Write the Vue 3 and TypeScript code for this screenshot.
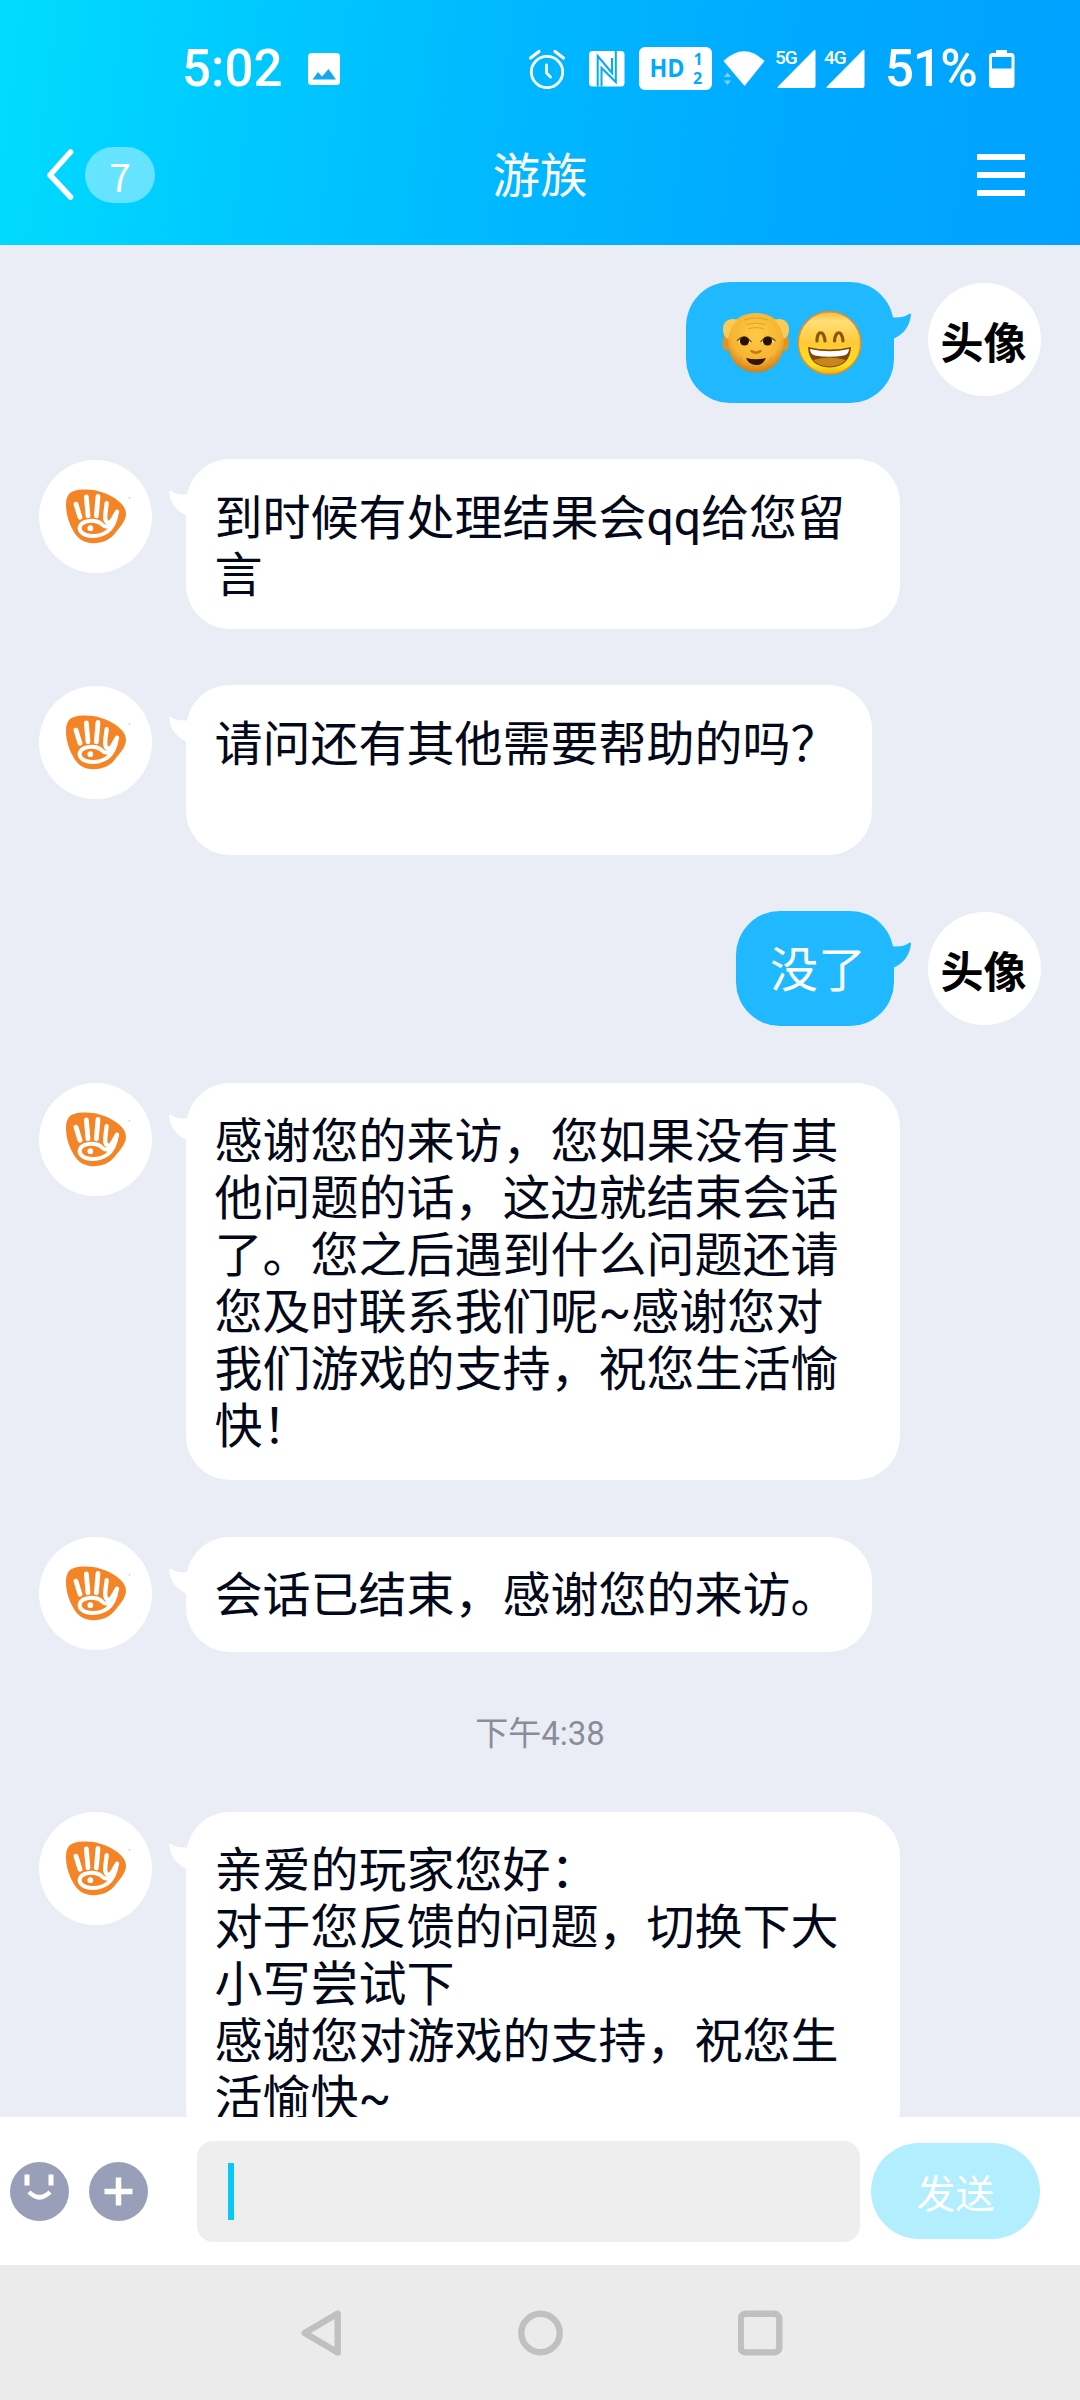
<script setup lang="ts">
interface Message {
  id: number
  side: 'left' | 'right'
  lines?: string[]
  emoji?: boolean
  wide?: boolean
  time?: string
}

const messages: Message[] = [
  { id: 1, side: 'right', emoji: true },
  { id: 2, side: 'left', wide: true, lines: ['到时候有处理结果会qq给您留', '言'] },
  { id: 3, side: 'left', lines: ['请问还有其他需要帮助的吗？', ''] },
  { id: 4, side: 'right', lines: ['没了'] },
  {
    id: 5,
    side: 'left',
    wide: true,
    lines: [
      '感谢您的来访，您如果没有其',
      '他问题的话，这边就结束会话',
      '了。您之后遇到什么问题还请',
      '您及时联系我们呢~感谢您对',
      '我们游戏的支持，祝您生活愉',
      '快！',
    ],
  },
  { id: 6, side: 'left', lines: ['会话已结束，感谢您的来访。'] },
  {
    id: 7,
    side: 'left',
    wide: true,
    time: '下午4:38',
    lines: [
      '亲爱的玩家您好：',
      '对于您反馈的问题，切换下大',
      '小写尝试下',
      '感谢您对游戏的支持，祝您生',
      '活愉快~',
    ],
  },
]
</script>

<template>
  <div class="screen">
    <header class="header">
      <div class="status">
        <span class="clock">5:02</span>
        <svg class="s-image" width="32" height="32" viewBox="0 0 32 32">
          <rect width="32" height="32" rx="3.5" fill="#fff" />
          <path d="M4.5 26.5 10 19l4 4.500L20.500 16l7.500 10.500z" fill="#14a9ee" />
        </svg>
        <div class="status-right">
          <svg class="s-alarm" width="38" height="40" viewBox="0 0 38 40" fill="none" stroke="#fff" stroke-linecap="round">
            <circle cx="19" cy="23" r="15.700" stroke-width="2.800" />
            <path d="M2.500 9 11 2.500M27 2.500 35.500 9" stroke-width="3.200" />
            <path d="M18.500 16v8l4 4" stroke-width="2.800" stroke-linejoin="round" />
          </svg>
          <svg class="s-nfc" width="36" height="36" viewBox="0 0 36 36">
            <rect width="35.500" height="35.500" rx="3.500" fill="#fff" />
            <path d="M8.700 35.500V5L23 22V7" fill="none" stroke="#00abff" stroke-width="2" />
            <path d="M12.500 35.500V17L26.800 31V0" fill="none" stroke="#00abff" stroke-width="2" />
          </svg>
          <svg class="s-hd" width="73" height="43" viewBox="0 0 73 43">
            <rect width="73" height="43" rx="6" fill="#fff" />
            <text x="10.500" y="30" font-size="24.500" textLength="35" lengthAdjust="spacingAndGlyphs">HD</text>
            <text x="54.500" y="18" font-size="16">1</text>
            <text x="54" y="37" font-size="16">2</text>
          </svg>
          <svg class="s-wifi" width="42" height="36" viewBox="0 0 42 36">
            <path d="M.500 10Q21-9.500 41.500 10L21.500 35z" fill="#fff" />
            <path d="M1 26 4.500 21.500 8 26zM1 29.500h7L4.500 34z" fill="#7fd2ff" />
          </svg>
          <div class="sig">
            <span>5G</span>
            <svg width="41" height="40" viewBox="0 0 41 40">
              <path d="M3 37.500 38.500 1.500Q40.500 0 40.500 2V37Q40.500 39 38.500 39H4Q1.500 39 3 37.500z" fill="#fff" />
            </svg>
          </div>
          <div class="sig second">
            <span>4G</span>
            <svg width="41" height="40" viewBox="0 0 41 40">
              <path d="M3 37.500 38.500 1.500Q40.500 0 40.500 2V37Q40.500 39 38.500 39H4Q1.500 39 3 37.500z" fill="#fff" />
            </svg>
          </div>
          <span class="percent">51%</span>
          <svg class="s-bat" width="26" height="38" viewBox="0 0 26 38">
            <path d="M7 0h11v3h4q3.500 0 3.500 3.500v28q0 3.500-3.500 3.500H3.500Q0 38 0 34.500v-28Q0 3 3.500 3H7zM3 7v11.500h19.500V7z" fill="#fff" fill-rule="evenodd" />
          </svg>
        </div>
      </div>
      <div class="titlebar">
        <div class="back">
          <svg width="28" height="52" viewBox="0 0 28 52" fill="none" stroke="#fff" stroke-width="5.600" stroke-linecap="round" stroke-linejoin="round">
            <path d="M24.500 3 4 26 24.500 48" />
          </svg>
          <span class="badge">7</span>
        </div>
        <h1>游族</h1>
        <div class="menu"><i></i><i></i><i></i></div>
      </div>
    </header>

    <main class="chat">
      <template v-for="m in messages" :key="m.id">
        <div v-if="m.time" class="time">{{ m.time }}</div>
        <div class="row" :class="m.side">
          <div class="avatar">
            <svg v-if="m.side === 'left'" width="113" height="113" viewBox="27 28.5 339 339">
              <path
                d="M108 162C108 128 126 118 158 117C192 115 220 124 244 137C272 153 288 170 288 190C288 212 268 232 254 250C240 268 218 278 190 278C162 278 142 266 128 238C115 213 108 190 108 162Z"
                fill="#f58426"
              />
              <g fill="none" stroke="#fff" stroke-linecap="round" stroke-linejoin="round">
                <path d="M138 161 150 200M169 139l5 57M204 138l-5 58" stroke-width="14.500" />
                <path d="M230 158C228 178 224 196 226 206C229 220 240 220 247 208C255 195 257 190 261 184" stroke-width="13" />
                <path d="M261 184C257 212 248 232 232 243C208 261 170 260 154 245C144 234 150 220 163 215C182 207 207 211 216 222C225 232 238 230 246 216" stroke-width="12" />
              </g>
              <circle cx="181" cy="233" r="8.500" fill="#fff" />
              <circle cx="298" cy="142" r="2" fill="#9aa79a" />
            </svg>
            <span v-else>头像</span>
          </div>
          <div class="bubble" :class="{ wide: m.wide, emojis: m.emoji }">
            <svg class="tail" width="22" height="27" viewBox="0 0 22 27">
              <path d="M0 2Q0-.500 2 1Q9 6 22 4V26H18Q2 19 0 2z" />
            </svg>
            <template v-if="m.emoji">
              <svg width="68" height="62" viewBox="0 0 68 62">
                <defs>
                  <radialGradient id="oldSkin" cx=".5" cy=".35" r=".65">
                    <stop offset="0" stop-color="#ffca45" />
                    <stop offset=".7" stop-color="#f6b432" />
                    <stop offset="1" stop-color="#cf7d16" />
                  </radialGradient>
                </defs>
                <ellipse cx="4.500" cy="31" rx="4" ry="8" fill="#dd9426" />
                <ellipse cx="63" cy="31" rx="4" ry="8" fill="#dd9426" />
                <path d="M34 1C52 1 62 12 62 30C62 48 50 60.500 34 60.500C18 60.500 6 48 6 30C6 12 16 1 34 1Z" fill="url(#oldSkin)" />
                <path d="M16 8C8 5 1 9 1 17C1 23 3 25 6 27C8 22 8 15 16 8ZM52 8C60 5 67 9 67 17C67 23 65 25 62 27C60 22 60 15 52 8Z" fill="#fbc956" />
                <path d="M22 8Q34 4 46 8M24 12.500Q34 9.500 44 12.500M26 16.500Q34 14.500 42 16.500" fill="none" stroke="#dfa033" stroke-width="1" />
                <path d="M15 29Q21.500 21 29.500 30Q22 35 15 29ZM38.500 30Q46 21 53.500 29Q46 35 38.500 30Z" fill="#f6dfae" />
                <path d="M15 29Q21.500 21 29.500 30M38.500 30Q46 21 53.500 29" fill="none" stroke="#8a5512" stroke-width="1.300" />
                <circle cx="22.500" cy="29" r="4.600" fill="#281303" />
                <circle cx="45.500" cy="29" r="4.600" fill="#281303" />
                <path d="M29.500 39Q34 42.500 38.500 39" fill="none" stroke="#ca7814" stroke-width="2.500" stroke-linecap="round" />
                <path d="M20 45Q18 48 20 51M48 45Q50 48 48 51" fill="none" stroke="#e29b28" stroke-width="1.200" />
                <path d="M24 46Q34 48.500 44 46Q41 53 34 53Q27 53 24 46Z" fill="#35130a" />
              </svg>
              <svg width="65" height="66" viewBox="0 0 65 66">
                <defs>
                  <linearGradient id="smile" x1="0" y1="0" x2="0" y2="1">
                    <stop offset="0" stop-color="#f9b83d" />
                    <stop offset=".15" stop-color="#ffdf78" />
                    <stop offset=".5" stop-color="#ffc936" />
                    <stop offset=".85" stop-color="#ffe11d" />
                    <stop offset="1" stop-color="#eeb018" />
                  </linearGradient>
                </defs>
                <circle cx="32.500" cy="33" r="31.300" fill="url(#smile)" stroke="#e0902a" stroke-width="1.500" />
                <path d="M20 31C20 20 27 20 28 31M37.500 31C38.500 20 45 20 46 31" fill="none" stroke="#85570f" stroke-width="3.200" stroke-linecap="round" />
                <path d="M11 37Q32.500 42 54 37Q53 57 32.500 57.500Q12 57 11 37Z" fill="#80460d" />
                <path d="M16 50Q32.500 45 49 50Q43 56.500 32.500 56.500Q22 56.500 16 50Z" fill="#c88519" />
                <path d="M13 39Q32.500 43.500 52 39Q52 44 47 45.500Q32.500 48 18 45.500Q13 44 13 39Z" fill="#fff" />
              </svg>
            </template>
            <template v-else>
              <div v-for="(line, i) in m.lines" :key="i" class="line">{{ line }}</div>
            </template>
          </div>
        </div>
      </template>
    </main>

    <footer class="composer">
      <svg width="59" height="59" viewBox="0 0 59 59">
        <circle cx="29.500" cy="29.500" r="29.500" fill="#9a9fb9" />
        <path d="M14.500 12.500h5v11h-5zM38.500 12.500h5v11h-5z" fill="#fff" />
        <path d="M19 30Q29.500 40.500 40 30" fill="none" stroke="#fff" stroke-width="4.500" />
      </svg>
      <svg class="plus" width="59" height="59" viewBox="0 0 59 59">
        <circle cx="29.500" cy="29.500" r="29.500" fill="#9a9fb9" />
        <path d="M29.500 15.500v28M15.500 29.500h28" stroke="#fff" stroke-width="5.500" />
      </svg>
      <div class="input"><i class="caret"></i></div>
      <button class="send">发送</button>
    </footer>

    <nav class="navbar">
      <svg width="45" height="52" viewBox="0 0 45 52"><path d="M39.700 6.500V45.500L6.700 26z" /></svg>
      <svg width="45" height="52" viewBox="0 0 45 52"><circle cx="22.500" cy="26" r="19.200" /></svg>
      <svg width="45" height="52" viewBox="0 0 45 52"><rect x="2.700" y="6.800" width="38.600" height="38.600" rx="5" /></svg>
    </nav>
  </div>
</template>

<style>
body {
  margin: 0;
}
</style>

<style scoped>
.screen {
  width: 1080px;
  height: 2400px;
  display: flex;
  flex-direction: column;
  overflow: hidden;
  background: #eaedf5;
  font-family: Roboto, 'Noto Sans CJK SC', sans-serif;
}
.header {
  height: 245px;
  flex: none;
  color: #fff;
  background: linear-gradient(97deg, #00dcff 0%, #00c5ff 28%, #00b5ff 52%, #00a8ff 75%, #00a2ff 100%);
}
.status {
  height: 137px;
  display: flex;
  align-items: center;
  padding-left: 182px;
  box-sizing: border-box;
}
.clock,
.percent {
  font-size: 51px;
  font-weight: 500;
  line-height: 60px;
}
.clock {
  width: 126px;
}
.status-right {
  display: flex;
  align-items: center;
  margin-left: 188px;
}
.s-nfc {
  margin-left: 23px;
}
.s-hd {
  margin-left: 14px;
  fill: #00abff;
  font-family: 'Open Sans', sans-serif;
  font-weight: 700;
}
.s-wifi {
  margin-left: 11px;
}
.sig {
  position: relative;
  margin-left: 10px;
  height: 40px;
}
.sig.second {
  margin-left: 8px;
}
.sig svg {
  display: block;
}
.sig span {
  position: absolute;
  left: 0;
  top: -3px;
  font-size: 19px;
  line-height: 24px;
  font-weight: 500;
  letter-spacing: -1px;
}
.percent {
  margin-left: 20px;
  width: 104px;
  letter-spacing: -1.3px;
}
.titlebar {
  height: 75px;
  display: grid;
  grid-template-columns: 1fr auto 1fr;
  align-items: center;
  padding: 0 55px 0 46px;
}
.back {
  display: flex;
  align-items: center;
}
.badge {
  width: 70px;
  height: 56px;
  margin-left: 11px;
  border-radius: 28px;
  background: rgba(255, 255, 255, 0.4);
  font: 400 39px/56px 'Noto Sans CJK SC', sans-serif;
  text-align: center;
}
h1 {
  margin: 4px 0 0 9px;
  font-size: 47.5px;
  font-weight: 400;
  line-height: 60px;
}
.menu {
  justify-self: end;
  width: 48px;
  display: flex;
  flex-direction: column;
  gap: 12px;
}
.menu i {
  height: 6px;
  background: #fff;
}
.chat {
  height: 1872px;
  flex: none;
  box-sizing: border-box;
  padding: 37.3px 39px 0;
  display: flex;
  flex-direction: column;
  gap: 56.5px;
  overflow: hidden;
}
.row {
  display: flex;
  align-items: flex-start;
  flex: none;
}
.row.right {
  flex-direction: row-reverse;
}
.avatar {
  width: 113px;
  height: 113px;
  flex: none;
  margin-top: 0.7px;
  border-radius: 50%;
  background: #fff;
  text-align: center;
  font: 700 43px/115px 'Noto Sans CJK SC', sans-serif;
  color: #000;
}
.avatar span {
  margin-left: -2px;
}
.avatar svg {
  display: block;
}
.bubble {
  position: relative;
  box-sizing: border-box;
  width: 686px;
  min-height: 115px;
  margin-left: 34px;
  padding: 30.500px 0 25px 28.500px;
  border-radius: 44px;
  background: #fff;
  color: #03081a;
  font-size: 48px;
  line-height: 57px;
}
.bubble.wide {
  width: 714px;
}
.right .bubble {
  width: auto;
  margin: 0 34px 0 0;
  padding: 30.500px 28px 25px 33.500px;
  background: #20b9ff;
  color: #fff;
}
.right .bubble.emojis {
  width: 208px;
  height: 120.5px;
  padding: 0 32px 0 36px;
  display: flex;
  align-items: center;
  gap: 7px;
}
.line {
  height: 57px;
  white-space: pre;
}
.tail {
  position: absolute;
  left: -17px;
  top: 31px;
  fill: #fff;
}
.right .tail {
  left: auto;
  right: -17px;
  transform: scaleX(-1);
  fill: #20b9ff;
}
.time {
  height: 47px;
  flex: none;
  text-align: center;
  font-size: 33px;
  line-height: 51px;
  color: #8a8c99;
}
.composer {
  height: 148px;
  flex: none;
  display: flex;
  align-items: center;
  padding-left: 10px;
  background: #fff;
}
.plus {
  margin-left: 20px;
}
.input {
  width: 663px;
  height: 101px;
  margin-left: 49px;
  border-radius: 16px;
  background: #eee;
  display: flex;
  align-items: center;
}
.caret {
  width: 6px;
  height: 57px;
  margin-left: 31px;
  background: #05caf6;
}
.send {
  width: 169px;
  height: 96px;
  margin-left: 11px;
  padding: 0;
  border: 0;
  border-radius: 48px;
  background: #b2eefe;
  color: #fff;
  font: 400 39px/94px 'Noto Sans CJK SC', sans-serif;
}
.navbar {
  height: 135px;
  flex: none;
  display: flex;
  justify-content: center;
  align-items: center;
  gap: 175px;
  background: #ebebeb;
}
.navbar svg {
  fill: none;
  stroke: #c0c0c0;
  stroke-width: 6.4;
  stroke-linejoin: round;
}
</style>
